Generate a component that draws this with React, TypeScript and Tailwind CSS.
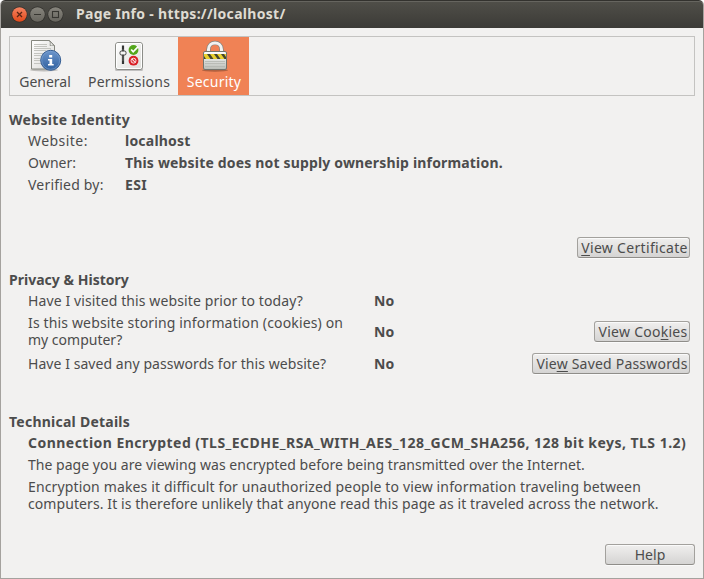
import type { ReactNode } from 'react';

function WindowButtons() {
  return (
    <svg width="54" height="20" viewBox="0 0 54 20" className="block">
      <defs>
        <linearGradient id="close" x1="0" y1="0" x2="0" y2="1">
          <stop offset="0" stopColor="#f58462" />
          <stop offset="1" stopColor="#e2491a" />
        </linearGradient>
        <linearGradient id="grey" x1="0" y1="0" x2="0" y2="1">
          <stop offset="0" stopColor="#87857d" />
          <stop offset="1" stopColor="#67655e" />
        </linearGradient>
      </defs>
      <circle cx="9.500" cy="10.500" r="8" fill="#31302c" />
      <circle cx="27.500" cy="10.500" r="8" fill="#31302c" />
      <circle cx="45.500" cy="10.500" r="8" fill="#31302c" />
      <circle cx="9.500" cy="10.500" r="7.300" fill="url(#close)" />
      <circle cx="27.500" cy="10.500" r="7.300" fill="url(#grey)" />
      <circle cx="45.500" cy="10.500" r="7.300" fill="url(#grey)" />
      <path d="M7 8l5 5M12 8l-5 5" stroke="#5b2514" strokeWidth="1.300" />
      <path d="M24 10.500h7" stroke="#373631" strokeWidth="1.100" />
      <rect x="42.500" y="7.500" width="6" height="6" fill="none" stroke="#373631" strokeWidth="1.100" />
    </svg>
  );
}

function GeneralIcon() {
  return (
    <svg width="34" height="34" viewBox="0 0 34 34">
      <defs>
        <linearGradient id="paper" x1="0" y1="0" x2="1" y2="1">
          <stop offset="0" stopColor="#ffffff" />
          <stop offset="1" stopColor="#d9d9d5" />
        </linearGradient>
        <linearGradient id="info" x1="0" y1="0" x2="0" y2="1">
          <stop offset="0" stopColor="#6d96cc" />
          <stop offset="1" stopColor="#2f609f" />
        </linearGradient>
      </defs>
      <ellipse cx="16" cy="32" rx="14" ry="1.500" fill="#8b8b87" opacity=".5" />
      <path d="M3.500 2.500h18l5 5v23.500h-23z" fill="url(#paper)" stroke="#85877f" />
      <path d="M21 2.500c1.500 1 1.500 3 1 5 2-.5 4-.3 4.500.5z" fill="#fff" stroke="#85877f" strokeWidth=".8" />
      <path d="M6 6.500h13M6 8.500h13M6 10.500h17M6 12.500h12M6 15.500h9M6 17.500h7M6 20.500h6M6 22.500h6M6 25.500h7" stroke="#c3c4bf" />
      <circle cx="22.700" cy="22.300" r="10" fill="url(#info)" stroke="#31598f" />
      <circle cx="22.700" cy="22.300" r="9" fill="none" stroke="#80a4d2" strokeWidth=".6" />
      <path d="M21.200 17h3v2.600h-3zM20 21h4.200v5h1.500v1.500H20V26h1.500v-3.500H20z" fill="#fff" />
    </svg>
  );
}

function PermissionsIcon() {
  return (
    <svg width="34" height="34" viewBox="0 0 34 34">
      <defs>
        <linearGradient id="panel" x1="0" y1="0" x2="1" y2="1">
          <stop offset="0" stopColor="#ffffff" />
          <stop offset="1" stopColor="#dededa" />
        </linearGradient>
      </defs>
      <rect x="3" y="30" width="28" height="3" rx="1.500" fill="#777" opacity=".4" />
      <rect x="3.500" y="4.500" width="27" height="27" rx="2.500" fill="url(#panel)" stroke="#8c8d88" />
      <rect x="4.500" y="5.500" width="25" height="25" rx="1.500" fill="none" stroke="#fff" />
      <path d="M11 7.500V26" stroke="#343634" strokeWidth="2.200" />
      <path d="M11 11v12" stroke="#777975" strokeWidth=".8" />
      <rect x="8" y="13" width="6" height="4" rx="1.500" fill="#f5f5f3" stroke="#3c3e3c" />
      <circle cx="21.500" cy="12" r="4.900" fill="#54a71c" />
      <path d="M19.200 11.500l2 2.300 5-5.200" fill="none" stroke="#fff" strokeWidth="1.700" />
      <circle cx="21.500" cy="22.700" r="4.900" fill="#d81f25" />
      <circle cx="21.500" cy="22.700" r="2.500" fill="#df4146" stroke="#fff" strokeWidth=".8" />
      <path d="M19.700 20.900l3.600 3.600" stroke="#fff" strokeWidth="1" />
    </svg>
  );
}

function SecurityIcon() {
  return (
    <svg width="35" height="34" viewBox="0 0 35 34">
      <defs>
        <linearGradient id="lock" x1="0" y1="0" x2="0" y2="1">
          <stop offset="0" stopColor="#ffffff" />
          <stop offset="1" stopColor="#babdb6" />
        </linearGradient>
        <clipPath id="band">
          <rect x="7" y="16" width="22" height="5" />
        </clipPath>
      </defs>
      <ellipse cx="18" cy="32.300" rx="13" ry="1.500" fill="#6f402c" opacity=".5" />
      <path d="M11.500 15v-3.500c0-8.800 13-8.800 13 0V15" fill="none" stroke="#84857f" strokeWidth="4.400" />
      <path d="M11.500 15v-3.500c0-8.800 13-8.800 13 0V15" fill="none" stroke="#f2f2f0" strokeWidth="3" />
      <rect x="6.500" y="13.500" width="23" height="18" rx="1.500" fill="url(#lock)" stroke="#73746d" />
      <g clipPath="url(#band)">
        <rect x="7" y="16" width="22" height="5" fill="#e8cf2e" />
        <path d="M7 18l2 3H7zM10 16h3l3.500 5h-3zM17 16h3l3.500 5h-3zM24 16h3l2 3v2h-1.500z" fill="#45452f" />
      </g>
      <path d="M8 23.500h20M8 25.500h20M8 28.500h20" stroke="#b4b6b0" strokeWidth=".8" />
    </svg>
  );
}

function Tab({ icon, label, className }: { icon: ReactNode; label: string; className: string }) {
  return (
    <div className={`flex h-[58px] flex-col items-center pt-px ${className}`}>
      <div className="h-[35px]">{icon}</div>
      <span className="whitespace-nowrap">{label}</span>
    </div>
  );
}

function Button({ children, className }: { children: ReactNode; className: string }) {
  return (
    <button
      className={`flex h-[21px] shrink-0 items-start justify-center whitespace-nowrap rounded-[3px] border border-[#a3a19d] border-b-[#8f8d89] bg-linear-to-b from-[#f0efee] to-[#d5d4d3] pt-px shadow-[inset_0_1px_0_#fafafa,0_1px_0_#fafafa] ${className}`}
    >
      <span>{children}</span>
    </button>
  );
}

function Key({ children }: { children: string }) {
  return <span className="underline decoration-1 underline-offset-2">{children}</span>;
}

export default function App() {
  return (
    <div className="h-[579px] w-[704px] bg-white font-['Noto_Sans',sans-serif] text-[14px] leading-[17px] text-[#4c4c4c]">
      <div className="flex h-full flex-col overflow-hidden rounded-t-[5px] border-x border-b border-[#a5a29e] bg-[#f2f1f0]">
        <header className="-mx-px flex h-7 shrink-0 items-start rounded-t-[5px] border-t border-[#33322e] bg-linear-to-b from-[#504f49] to-[#3c3b37] pl-[10px] shadow-[inset_0_1px_0_#66655f]">
          <div className="pt-[3px]">
            <WindowButtons />
          </div>
          <h1 className="ml-3 mt-1 whitespace-nowrap font-bold tracking-[0.3px] text-[#dfdbd2]">Page Info - https://localhost/</h1>
        </header>

        <main className="flex flex-col px-2">
          <nav className="mt-2 flex h-[60px] border border-[#c4c3c1]">
            <Tab icon={<GeneralIcon />} label="General" className="w-[70px]" />
            <Tab icon={<PermissionsIcon />} label="Permissions" className="w-[98px] tracking-[0.22px]" />
            <Tab icon={<SecurityIcon />} label="Security" className="w-[71px] bg-[#f08255] pl-px tracking-[0.25px] text-white" />
          </nav>

          <section className="mt-[15px]">
            <h2 className="font-bold tracking-[0.32px]">Website Identity</h2>
            <dl className="mt-1 grid grid-cols-[97px_auto] gap-y-[5px] pl-[19px]">
              <dt className="tracking-[0.45px]">Website:</dt>
              <dd className="font-bold tracking-[0.22px]">localhost</dd>
              <dt>Owner:</dt>
              <dd className="font-bold tracking-[0.17px]">This website does not supply ownership information.</dd>
              <dt className="tracking-[0.2px]">Verified by:</dt>
              <dd className="font-bold tracking-[0.4px]">ESI</dd>
            </dl>
            <div className="mt-11 flex justify-end pr-[5px]">
              <Button className="w-[113px] pl-[2px] tracking-[0.32px]"><Key>V</Key>iew Certificate</Button>
            </div>
          </section>

          <section className="mt-[13px]">
            <h2 className="font-bold tracking-[0.02px]">Privacy &amp; History</h2>
            <div className="mt-1 flex h-[17px] pl-[19px]">
              <p className="w-[346px] tracking-[0.11px]">Have I visited this website prior to today?</p>
              <p className="font-bold">No</p>
            </div>
            <div className="mt-[5px] flex h-[34px] items-center pl-[19px] pr-[5px]">
              <p className="w-[346px]"><span className="tracking-[0.15px]">Is this website storing information (cookies) on</span><br />my computer?</p>
              <p className="flex-1 font-bold">No</p>
              <Button className="w-24 pl-[2px] tracking-[0.25px]">View Coo<Key>k</Key>ies</Button>
            </div>
            <div className="mt-[5px] flex h-[21px] items-center pl-[19px] pr-[5px]">
              <p className="w-[346px] tracking-[0.06px]">Have I saved any passwords for this website?</p>
              <p className="flex-1 font-bold">No</p>
              <Button className="w-[158px] pl-[2px] tracking-[0.2px]">Vie<Key>w</Key> Saved Passwords</Button>
            </div>
          </section>

          <section className="mt-[39px]">
            <h2 className="font-bold tracking-[0.24px]">Technical Details</h2>
            <div className="mt-1 flex flex-col gap-[5px] whitespace-nowrap pl-[19px]">
              <p className="font-bold tracking-[0.47px]">Connection Encrypted (TLS_ECDHE_RSA_WITH_AES_128_GCM_SHA256, 128 bit keys, TLS 1.2)</p>
              <p className="tracking-[0.03px]">The page you are viewing was encrypted before being transmitted over the Internet.</p>
              <p>
                <span className="tracking-[0.14px]">Encryption makes it difficult for unauthorized people to view information traveling between</span>
                <br />
                <span className="tracking-[0.085px]">computers. It is therefore unlikely that anyone read this page as it traveled across the network.</span>
              </p>
            </div>
          </section>

          <footer className="mt-8 flex justify-end">
            <Button className="w-[90px]">Help</Button>
          </footer>
        </main>
      </div>
    </div>
  );
}
